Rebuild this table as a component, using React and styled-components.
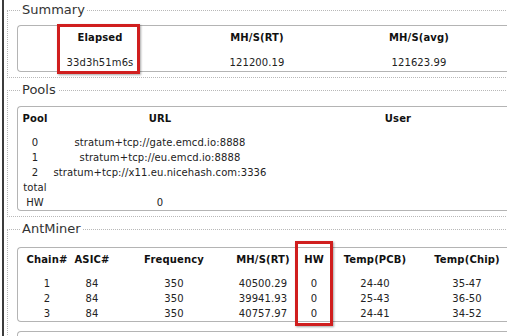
import React from 'react';
import styled, { createGlobalStyle } from 'styled-components';

const Global = createGlobalStyle`
  html, body { margin: 0; padding: 0; background: #fff; overflow: hidden; }
  body { font-family: "DejaVu Sans", Verdana, sans-serif; }
`;

const Page = styled.div`
  width: 640px;
  height: 336px;
  margin-left: 2px;
  border-left: 2px solid #3c3c3c;
  padding: 2px 0 0 3px;
  display: flex;
  flex-direction: column;
  gap: 4px;
  box-sizing: border-box;
  overflow: hidden;
`;

const Section = styled.fieldset`
  margin: 0;
  border: 1px dotted #b8b8b8;
  border-right: none;
  padding: ${p => p.$pt}px 0 5px 9px;
  min-width: 0;
  display: flex;
  flex-direction: column;
  gap: 9px;
`;

const Legend = styled.legend`
  margin-left: 3px;
  padding: 0 2px;
  font-size: 13px;
  line-height: 16px;
  color: #333;
`;

const Box = styled.div`
  position: relative;
  border: 1px solid #b4b4b4;
  border-right: none;
  border-radius: 4px 0 0 4px;
  padding-left: ${p => p.$pl}px;
  min-height: ${p => p.$min || 0}px;
  flex-shrink: 0;
`;

const Row = styled.div`
  display: grid;
  grid-template-columns: ${p => p.$cols};
  height: ${p => p.$h}px;
  align-items: center;
  justify-items: center;
  font-size: 10px;
  white-space: nowrap;
  font-weight: ${p => (p.$head ? 700 : 400)};
  letter-spacing: ${p => (p.$head ? 0.15 : 0.1)}px;
  color: ${p => (p.$head ? '#111' : '#222')};
`;

const Rows = styled.div`
  padding-top: ${p => p.$pt}px;
`;

const Mark = styled.div`
  position: absolute;
  left: ${p => p.$x}px;
  top: ${p => p.$y}px;
  width: ${p => p.$w}px;
  height: ${p => p.$hh}px;
  box-sizing: border-box;
  border: 3px solid #d01e1e;
  box-shadow: 1px 1px 2px rgba(0, 0, 0, 0.35);
  pointer-events: none;
`;

const sumCols = '152px 162px 162px';
const poolCols = '30px 220px 256px';
const minerCols = '46px 44px 120px 58px 44px 78px 106px';

const pools = [
  ['0', 'stratum+tcp://gate.emcd.io:8888', ''],
  ['1', 'stratum+tcp://eu.emcd.io:8888', ''],
  ['2', 'stratum+tcp://x11.eu.nicehash.com:3336', ''],
  ['total', '', ''],
  ['HW', '0', ''],
];

const chains = [
  ['1', '84', '350', '40500.29', '0', '24-40', '35-47'],
  ['2', '84', '350', '39941.93', '0', '25-43', '36-50'],
  ['3', '84', '350', '40757.97', '0', '24-41', '34-52'],
];

function Cells({ values }) {
  return values.map((v, i) => <span key={i}>{v}</span>);
}

export default function App() {
  return (
    <>
      <Global />
      <Page>
        <Section $pt={7}>
          <Legend>Summary</Legend>
          <Box $pl={6}>
            <Row $head $cols={sumCols} $h={22}>
              <Cells values={['Elapsed', 'MH/S(RT)', 'MH/S(avg)']} />
            </Row>
            <Rows $pt={5}>
              <Row $cols={sumCols} $h={18}>
                <Cells values={['33d3h51m6s', '121200.19', '121623.99']} />
              </Row>
            </Rows>
            <Mark $x={39} $y={-2} $w={83} $hh={50} />
          </Box>
        </Section>

        <Section $pt={8}>
          <Legend>Pools</Legend>
          <Box $pl={2}>
            <Row $head $cols={poolCols} $h={22}>
              <Cells values={['Pool', 'URL', 'User']} />
            </Row>
            <Rows $pt={6}>
              {pools.map((r, i) => (
                <Row key={i} $cols={poolCols} $h={15}>
                  <Cells values={r} />
                </Row>
              ))}
            </Rows>
          </Box>
        </Section>

        <Section $pt={10}>
          <Legend>AntMiner</Legend>
          <Box $pl={6}>
            <Row $head $cols={minerCols} $h={22}>
              <Cells
                values={['Chain#', 'ASIC#', 'Frequency', 'MH/S(RT)', 'HW', 'Temp(PCB)', 'Temp(Chip)']}
              />
            </Row>
            <Rows $pt={6}>
              {chains.map((r, i) => (
                <Row key={i} $cols={minerCols} $h={15}>
                  <Cells values={r} />
                </Row>
              ))}
            </Rows>
            <Mark $x={277} $y={-7} $w={38} $hh={85} />
          </Box>
          <Box $pl={6} $min={40} />
        </Section>
      </Page>
    </>
  );
}
